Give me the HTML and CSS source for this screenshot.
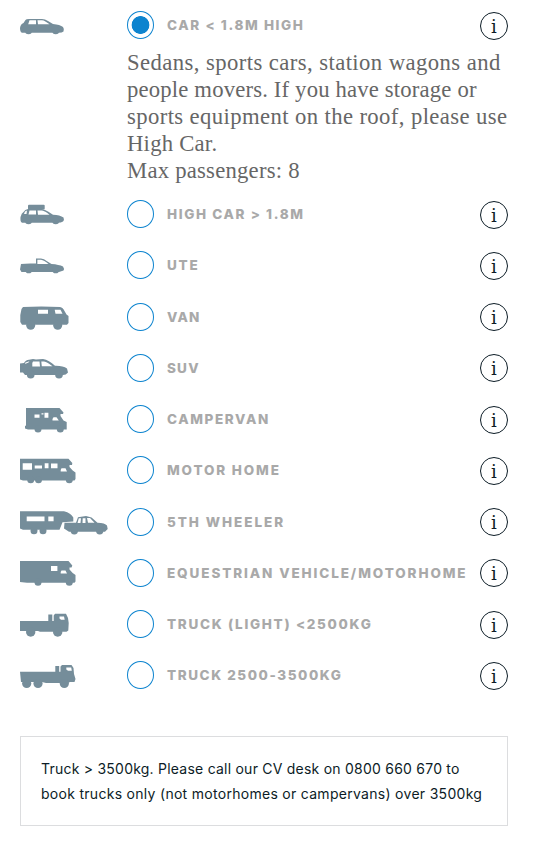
FILE: index.html
```html
<!DOCTYPE html>
<html lang="en">
<head>
    <meta charset="UTF-8">
    <meta name="viewport" content="width=device-width, initial-scale=1.0">
    <title>Vehicle type</title>
    <link rel="stylesheet" href="styles.css">
</head>
<body>

<div class="container">
    <div class="vehicle first">
        <svg class="icon" viewBox="0 0 90 30"><path d="M0 18Q.5 14 3.500 13L5.500 10Q6 9 9 9H22Q25 9 28 11L33 14Q40 14.500 43 17Q44.500 19 43.500 21.500Q42 22.700 39 22.700H2Q0 22 0 18Z"/><circle cx="8.500" cy="20.700" r="3.500"/><circle cx="35.700" cy="20.700" r="3.500"/><path class="glass" d="M9.500 10.200H16V14.300H8.200ZM17.500 10.200H22Q25 10.500 29.500 14.300H18Z"/></svg>
        <span class="radio checked"></span>
        <span class="name car">CAR &lt; 1.8M HIGH</span>
        <span class="info">i</span>
    </div>
    <div class="description">
        <div class="l1">Sedans, sports cars, station wagons and</div>
        <div class="l2">people movers. If you have storage or</div>
        <div class="l3">sports equipment on the roof, please use</div>
        <div class="l4">High Car.</div>
        <div class="l5">Max passengers: 8</div>
    </div>
    <div class="vehicle">
        <svg class="icon" viewBox="0 0 90 30"><rect x="8" y="5.700" width="16.700" height="4.800" rx="1"/><path d="M.5 18Q1.500 14 3.500 13Q5 10.500 8 10H22Q25 10.500 28 12.500L33 15.700Q40 16 43.500 18.500Q44.500 20.500 43 22.500Q41 23.700 38 23.700H2Q0 23 .5 18Z"/><circle cx="8.500" cy="21.700" r="3.500"/><circle cx="35.700" cy="21.700" r="3.500"/><path class="glass" d="M5 12.500L7 11.500L6.500 15H4ZM9.500 11.500H16V15.500H8.500ZM17.500 11.500H22Q25 12 29.500 15.700H18Z"/></svg>
        <span class="radio"></span>
        <span class="name high">HIGH CAR &gt; 1.8M</span>
        <span class="info">i</span>
    </div>
    <div class="vehicle">
        <svg class="icon" viewBox="0 0 90 30"><path d="M1 14Q7 13.200 16 13.600V8.600H21Q24 8.800 27 11.200L31.500 14Q39 14.500 43 16.500Q44.500 18.500 43.500 20.500L39 22H1.500L0 19.500Z"/><circle cx="8.700" cy="19.900" r="3.400"/><circle cx="35.700" cy="19.900" r="3.400"/><path class="glass" d="M17.400 9.700H21Q24 10 28.500 14H17.400Z"/></svg>
        <span class="radio"></span>
        <span class="name ute">UTE</span>
        <span class="info">i</span>
    </div>
    <div class="vehicle">
        <svg class="icon" viewBox="0 0 90 30"><path d="M3 5Q21 4.200 40 5Q43 5.500 44.500 9L46.500 12.500L48.500 14V21L47 22.700H2L.3 20V13L1.500 7Z"/><circle cx="10.700" cy="23.200" r="4.500"/><circle cx="37.700" cy="23.200" r="4.500"/><path class="glass" d="M18 7.700H28V11.700H18ZM34.700 7.700H40.500L42.500 11.700H35.500Z"/></svg>
        <span class="radio"></span>
        <span class="name">VAN</span>
        <span class="info">i</span>
    </div>
    <div class="vehicle">
        <svg class="icon" viewBox="0 0 90 30"><path d="M0 10.500L4 10Q5.500 7 9 6.800L13 5.900L16 6.500L23 5.900Q29 7 35 12.700Q43 12.500 47 15.500L48 19.500Q46 22 43 22H5L3 19.500H0Z"/><circle cx="10.700" cy="21.600" r="3.900"/><circle cx="39" cy="21.600" r="3.900"/><path class="glass" d="M13 8.500H19.500L20 13.500H12.300V10ZM21.300 8.500H24Q27.500 9 32.500 13.300H21.800ZM5.500 9.500L9.500 8.300L8.500 9.500L5 11Z"/></svg>
        <span class="radio"></span>
        <span class="name">SUV</span>
        <span class="info">i</span>
    </div>
    <div class="vehicle">
        <svg class="icon" viewBox="0 0 90 30"><path d="M6 4H39.500L43.500 8.500L43 10H40.500V12L43.500 16.500L46.700 18V25.500H8L5 24.500V21.700H6Z"/><circle cx="18" cy="25" r="3.500"/><circle cx="40.300" cy="25" r="3.500"/><path class="glass" d="M14.500 10.500H19.500V13.800H14.500ZM24.500 8.800H28.400V13.800H24.500ZM21.500 9.200H23.500V10.500H21.500ZM33.500 13.200H36.500L38.800 16.500H32.500V15Z"/></svg>
        <span class="radio"></span>
        <span class="name campervan">CAMPERVAN</span>
        <span class="info">i</span>
    </div>
    <div class="vehicle">
        <svg class="icon" viewBox="0 0 90 30"><path d="M0 3.700H48.500L52.300 8L52 10H49.500V12L52.700 15.500L55.500 17.500V24L54.500 25.500H3L0 24.500Z"/><circle cx="10.700" cy="24.800" r="3.500"/><circle cx="18.500" cy="24.800" r="3.500"/><circle cx="49.300" cy="24.800" r="3.500"/><path class="glass" d="M2.700 8.200H12V14.800H2.700ZM14.700 10.400H22V13.500H14.700ZM24.700 8.200H28.500V13.300H24.700ZM31 8.500H37.500V13.300H31ZM41.500 13.300H45.500L47 16.500H40.700V15Z"/></svg>
        <span class="radio"></span>
        <span class="name motor">MOTOR HOME</span>
        <span class="info">i</span>
    </div>
    <div class="vehicle">
        <svg class="icon" viewBox="0 0 90 30"><path d="M0 4.300H44Q51 6 53.300 10.500V14.500L42.500 15.200L39.500 22.700H3L0 21.500Z"/><circle cx="14" cy="23.700" r="3.500"/><circle cx="23" cy="23.700" r="3.500"/><path d="M44.500 15.700H56L58 10.300L66 9L71.500 10.500L77.500 15.700Q85 16 87 18.500L87.700 22L85 24.700H49L44 21.500Z"/><circle cx="54.300" cy="23.700" r="3.700"/><circle cx="79.700" cy="23.700" r="3.700"/><path class="glass" d="M6.700 9.500H24.500V14.200H6.700ZM28.300 9.500H33.600V14.200H28.300ZM58.800 11.200H61L60.500 16H57.500ZM62.700 11.200H65.500V16H62.500ZM67 11H70L74.500 15.700H68Z"/></svg>
        <span class="radio"></span>
        <span class="name wheeler">5TH WHEELER</span>
        <span class="info">i</span>
    </div>
    <div class="vehicle">
        <svg class="icon" viewBox="0 0 90 30"><path d="M0 3H48.500L52.300 7.500L51.500 9.500H49.500V11.500L52.700 15L55.500 17V23.500L54.500 24.800H7L0 24Z"/><circle cx="18" cy="24.200" r="3.500"/><circle cx="49.300" cy="24.200" r="3.500"/><path class="glass" d="M31 8H37.400V12.900H31ZM41.500 12.500H45.500L47 15.600H40.700V14Z"/></svg>
        <span class="radio"></span>
        <span class="name equestrian">EQUESTRIAN VEHICLE/MOTORHOME</span>
        <span class="info">i</span>
    </div>
    <div class="vehicle">
        <svg class="icon" viewBox="0 0 90 30"><path d="M0 12H28.300V5.500H32.300V12H33.700V6.500L35 4.800H46L48 9L48.700 14L48.300 21.500L46.500 22.700H20L18 22H0Z"/><circle cx="10.700" cy="23" r="4.700"/><circle cx="37.700" cy="23" r="4.700"/><path class="glass" d="M39.500 7.500H44L44.700 10.800H41L39.500 9.500Z"/></svg>
        <span class="radio"></span>
        <span class="name light">TRUCK (LIGHT) &lt;2500KG</span>
        <span class="info">i</span>
    </div>
    <div class="vehicle">
        <svg class="icon" viewBox="0 0 90 30"><path d="M0 11.700H35.300V6H39.200V11.700H40.500V6.500L42 5H51.500L53.500 8L54 14L55.500 19L54.500 22H50L48 23H26L22 22H1Z"/><circle cx="6.700" cy="23.500" r="4.600"/><circle cx="18" cy="23.500" r="4.600"/><circle cx="44.300" cy="23.500" r="4.600"/><path class="glass" d="M46.300 7.400H51.200L51.800 10.700H48L46.300 9.500Z"/></svg>
        <span class="radio"></span>
        <span class="name truck">TRUCK 2500-3500KG</span>
        <span class="info">i</span>
    </div>

    <div class="notice">
        <div class="n1">Truck &gt; 3500kg. Please call our CV desk on 0800 660 670 to</div>
        <div class="n2">book trucks only (not motorhomes or campervans) over 3500kg</div>
    </div>
</div>

</body>
</html>
```
FILE: styles.css
```css
body {
    margin: 0;
    background-color: #fff;
    font-family: Inter, Arial, sans-serif;
}
.container {
    width: 488px;
    padding-left: 20px;
}
.vehicle {
    display: grid;
    grid-template-columns: 107px 40px 1fr 28px;
    align-items: center;
    height: 51.25px;
}
.vehicle.first {
    height: 50px;
}
.icon {
    width: 90px;
    height: 30px;
    fill: #758d9a;
}
.glass {
    fill: #fff;
}
.radio {
    box-sizing: border-box;
    width: 27px;
    height: 28px;
    border: 1px solid #0d84cf;
    border-radius: 50%;
}
/* selected dot */
.checked {
    background: radial-gradient(circle, #0d84cf 8.5px, #fff 9.2px);
}
.name {
    color: #a9a9a9;
    font-size: 13.5px;
    font-weight: 800;
    letter-spacing: 1.2px;
    white-space: nowrap;
}
.car, .high {
    letter-spacing: 1.62px;
}
.ute {
    letter-spacing: 1.8px;
}
.campervan {
    letter-spacing: 1.6px;
}
.motor {
    letter-spacing: 1.85px;
}
.wheeler {
    letter-spacing: 1.95px;
}
.equestrian {
    letter-spacing: 1.89px;
}
.light {
    letter-spacing: 1.68px;
}
.truck {
    letter-spacing: 1.55px;
}
.info {
    box-sizing: border-box;
    width: 28px;
    height: 28px;
    margin-top: 1px;
    border: 1px solid #0c1c26;
    border-radius: 50%;
    color: #0c1c26;
    font-family: "DejaVu Serif", serif;
    font-size: 18px;
    line-height: 28px;
    text-align: center;
}
.description {
    margin: -1.5px 0 5.1px 107px;
    color: #666;
    font-family: "Liberation Serif", serif;
    font-size: 22.7px;
    line-height: 27px;
    white-space: nowrap;
}
.l1 {
    letter-spacing: 0.42px;
}
.l2 {
    letter-spacing: 0.17px;
}
.l3 {
    letter-spacing: 0.39px;
}
.l4, .l5 {
    letter-spacing: 0.23px;
}
.notice {
    box-sizing: border-box;
    height: 90px;
    margin-top: 35px;
    padding: 18.5px 20px;
    border: 1px solid #dcdddf;
    color: #0c1c26;
    font-size: 14px;
    line-height: 25px;
    white-space: nowrap;
}
.n1 {
    letter-spacing: 0.23px;
}
.n2 {
    letter-spacing: 0.29px;
}
```
